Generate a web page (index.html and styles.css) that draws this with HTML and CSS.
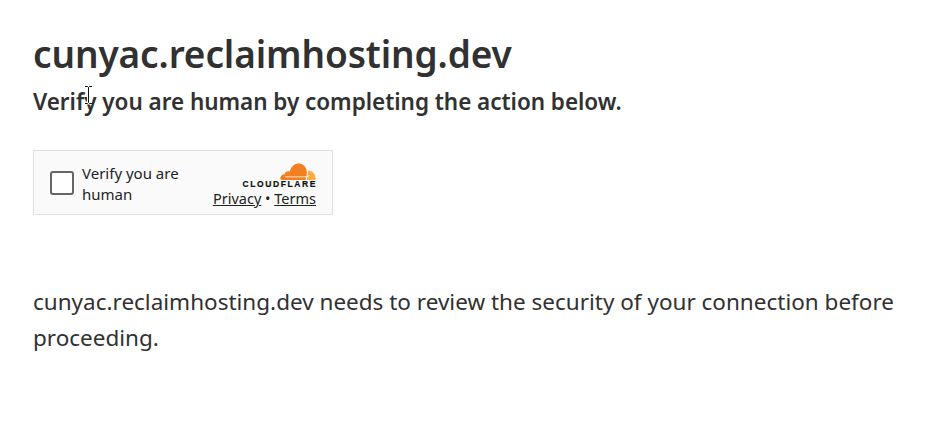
FILE: index.html
```html
<!DOCTYPE html>
<html lang="en">
<head>
<meta charset="utf-8">
<title>cunyac.reclaimhosting.dev</title>
<link rel="stylesheet" href="styles.css">
</head>
<body>
<main class="page">
  <h1 class="title">cunyac.reclaimhosting.dev</h1>
  <h2 class="subtitle">Verify you are human by completing the action below.</h2>
  <div class="widget">
    <label class="check">
      <span class="box"></span>
      <span class="check-label">Verify you are human</span>
    </label>
    <div class="brand">
      <svg class="cloud" width="36" height="17" viewBox="0 0 36 17" aria-hidden="true">
        <path fill="#f38020" d="M25.500 17H2C.8 17 0 16 .3 14.800.8 12.500 2.500 11 4.600 11.200 5 8.800 7.500 7.500 9.700 8.500 11 4 14.500.5 18.500.5c4 0 7 2.500 8 6.500.7 2.500.2 6.500-1 10z"/>
        <path fill="#faae40" d="M28.300 7.500c4.300 0 7.400 4 7.400 8.300 0 .6-.3 1.200-.9 1.200H26.700c.8-3.200 1.200-6.400 1.600-9.500z"/>
        <path fill="#fff" d="M5 13.600h21.200l2.600-1.200 1.800-.1-2.700 1.300 1.600.1-2.300 0-1 2-.4-1.400H5z"/>
      </svg>
      <span class="wordmark">CLOUDFLARE</span>
      <div class="links"><a href="#">Privacy</a> • <a href="#">Terms</a></div>
    </div>
  </div>
  <p class="note">cunyac.reclaimhosting.dev needs to review the security of your connection before proceeding.</p>
</main>
<svg class="cursor" width="9" height="20" viewBox="0 0 9 20" aria-hidden="true">
  <path fill="none" stroke="#fff" stroke-width="3" d="M1 1.500h7M4.500 1.500v16M1 18h7"/>
  <path fill="none" stroke="#111" stroke-width="1" d="M1 1.500h2.500l1 1 1-1H8M4.500 2.500v15M1 18.500h2.500l1-1 1 1H8"/>
</svg>
</body>
</html>
```
FILE: styles.css
```css
html, body {
  margin: 0;
  padding: 0;
  background: #fff;
}
body {
  font-family: "Noto Sans", "Open Sans", sans-serif;
  color: #313131;
  overflow: hidden;
}
.page {
  padding: 30px 33px 0;
  max-width: 880px;
}
.title {
  margin: 0;
  font-size: 37px;
  line-height: 48px;
  font-weight: 600;
  letter-spacing: -0.12px;
}
.subtitle {
  margin: 9px 0 0;
  font-size: 22.500px;
  line-height: 30px;
  font-weight: 600;
  letter-spacing: -0.04px;
}
.widget {
  margin-top: 33px;
  box-sizing: border-box;
  width: 300px;
  height: 65px;
  display: flex;
  justify-content: space-between;
  background: #fafafa;
  border: 1px solid #e0e0e0;
}
.check {
  display: flex;
  align-items: center;
  padding-left: 16px;
  gap: 8px;
}
.box {
  box-sizing: border-box;
  width: 24px;
  height: 24px;
  background: #fff;
  border: 2px solid #666;
  border-radius: 3px;
}
.check-label {
  width: 110px;
  padding-top: 2px;
  font-size: 15px;
  line-height: 21px;
  color: #232323;
}
.brand {
  display: flex;
  flex-direction: column;
  align-items: flex-end;
  padding: 12px 16px 0 0;
}
.cloud {
  display: block;
}
.wordmark {
  margin: 1px -1px 0 0;
  font-family: "Liberation Sans", sans-serif;
  font-size: 8.500px;
  line-height: 7px;
  font-weight: 700;
  letter-spacing: 1.600px;
  -webkit-text-stroke: 0.2px #111;
  color: #111;
}
.links {
  margin-top: 1px;
  font-size: 14.500px;
  line-height: 18px;
  color: #232323;
  white-space: nowrap;
}
.links a {
  color: #232323;
  text-decoration: underline;
}
.note {
  margin: 69px 0 0;
  font-size: 22.500px;
  line-height: 36px;
}
.cursor {
  position: absolute;
  left: 84px;
  top: 85px;
}
```
